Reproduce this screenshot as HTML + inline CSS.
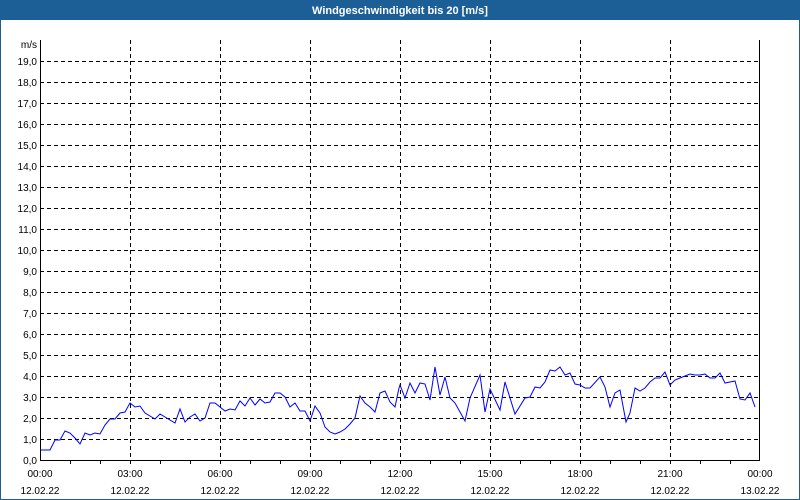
<!DOCTYPE html>
<html><head><meta charset="utf-8"><style>
html,body{margin:0;padding:0;width:800px;height:500px;overflow:hidden;background:#fff}
</style></head><body>
<svg width="800" height="500" xmlns="http://www.w3.org/2000/svg" style="display:block;font-family:'Liberation Sans',sans-serif">
<rect x="0" y="0" width="800" height="500" fill="#fff"/>
<rect x="0.5" y="0.5" width="799" height="499" fill="none" stroke="#1c5f96"/>
<rect x="0" y="0" width="800" height="20" fill="#1c5f96"/>
<text x="400" y="14" fill="#fff" font-size="11" font-weight="bold" text-anchor="middle">Windgeschwindigkeit bis 20 [m/s]</text>
<g stroke="#000" stroke-dasharray="4,3" stroke-width="1">
<g id="h">
<line x1="40" x2="760" y1="61.5" y2="61.5"/><line x1="40" x2="760" y1="82.5" y2="82.5"/><line x1="40" x2="760" y1="103.5" y2="103.5"/><line x1="40" x2="760" y1="124.5" y2="124.5"/><line x1="40" x2="760" y1="145.5" y2="145.5"/><line x1="40" x2="760" y1="166.5" y2="166.5"/><line x1="40" x2="760" y1="187.5" y2="187.5"/><line x1="40" x2="760" y1="208.5" y2="208.5"/><line x1="40" x2="760" y1="229.5" y2="229.5"/><line x1="40" x2="760" y1="250.5" y2="250.5"/><line x1="40" x2="760" y1="271.5" y2="271.5"/><line x1="40" x2="760" y1="292.5" y2="292.5"/><line x1="40" x2="760" y1="313.5" y2="313.5"/><line x1="40" x2="760" y1="334.5" y2="334.5"/><line x1="40" x2="760" y1="355.5" y2="355.5"/><line x1="40" x2="760" y1="376.5" y2="376.5"/><line x1="40" x2="760" y1="397.5" y2="397.5"/><line x1="40" x2="760" y1="418.5" y2="418.5"/><line x1="40" x2="760" y1="439.5" y2="439.5"/>
</g>
<line x1="130.5" x2="130.5" y1="40" y2="460"/><line x1="220.5" x2="220.5" y1="40" y2="460"/><line x1="310.5" x2="310.5" y1="40" y2="460"/><line x1="400.5" x2="400.5" y1="40" y2="460"/><line x1="490.5" x2="490.5" y1="40" y2="460"/><line x1="580.5" x2="580.5" y1="40" y2="460"/><line x1="670.5" x2="670.5" y1="40" y2="460"/>
</g>
<g stroke="#000" stroke-width="1">
<line x1="40.5" x2="40.5" y1="40" y2="461"/><line x1="759.5" x2="759.5" y1="40" y2="461"/><line x1="40" x2="760" y1="460.5" y2="460.5"/>
<line x1="70.5" x2="70.5" y1="460" y2="464"/><line x1="100.5" x2="100.5" y1="460" y2="464"/><line x1="130.5" x2="130.5" y1="460" y2="464"/><line x1="160.5" x2="160.5" y1="460" y2="464"/><line x1="190.5" x2="190.5" y1="460" y2="464"/><line x1="220.5" x2="220.5" y1="460" y2="464"/><line x1="250.5" x2="250.5" y1="460" y2="464"/><line x1="280.5" x2="280.5" y1="460" y2="464"/><line x1="310.5" x2="310.5" y1="460" y2="464"/><line x1="340.5" x2="340.5" y1="460" y2="464"/><line x1="370.5" x2="370.5" y1="460" y2="464"/><line x1="400.5" x2="400.5" y1="460" y2="464"/><line x1="430.5" x2="430.5" y1="460" y2="464"/><line x1="460.5" x2="460.5" y1="460" y2="464"/><line x1="490.5" x2="490.5" y1="460" y2="464"/><line x1="520.5" x2="520.5" y1="460" y2="464"/><line x1="550.5" x2="550.5" y1="460" y2="464"/><line x1="580.5" x2="580.5" y1="460" y2="464"/><line x1="610.5" x2="610.5" y1="460" y2="464"/><line x1="640.5" x2="640.5" y1="460" y2="464"/><line x1="670.5" x2="670.5" y1="460" y2="464"/><line x1="700.5" x2="700.5" y1="460" y2="464"/><line x1="730.5" x2="730.5" y1="460" y2="464"/>
</g>
<g font-size="10" fill="#000" text-anchor="end">
<text x="37" y="48">m/s</text>
<text x="37" y="65">19,0</text><text x="37" y="86">18,0</text><text x="37" y="107">17,0</text><text x="37" y="128">16,0</text><text x="37" y="149">15,0</text><text x="37" y="170">14,0</text><text x="37" y="191">13,0</text><text x="37" y="212">12,0</text><text x="37" y="233">11,0</text><text x="37" y="254">10,0</text><text x="37" y="275">9,0</text><text x="37" y="296">8,0</text><text x="37" y="317">7,0</text><text x="37" y="338">6,0</text><text x="37" y="359">5,0</text><text x="37" y="380">4,0</text><text x="37" y="401">3,0</text><text x="37" y="422">2,0</text><text x="37" y="443">1,0</text><text x="37" y="464">0,0</text>
</g>
<g font-size="10" fill="#000" text-anchor="middle">
<text x="40" y="477">00:00</text><text x="40" y="494">12.02.22</text>
<text x="130" y="477">03:00</text><text x="130" y="494">12.02.22</text>
<text x="220" y="477">06:00</text><text x="220" y="494">12.02.22</text>
<text x="310" y="477">09:00</text><text x="310" y="494">12.02.22</text>
<text x="400" y="477">12:00</text><text x="400" y="494">12.02.22</text>
<text x="490" y="477">15:00</text><text x="490" y="494">12.02.22</text>
<text x="580" y="477">18:00</text><text x="580" y="494">12.02.22</text>
<text x="670" y="477">21:00</text><text x="670" y="494">12.02.22</text>
<text x="760" y="477">00:00</text><text x="760" y="494">13.02.22</text>
</g>
<polyline fill="none" stroke="#0000ff" stroke-width="1" points="40,450 50,450 55,440 60,440 65,431 70,433 75,438 80,444 85,433 90,435 95,433 100,434 105,425 110,419 115,419 120,413 125,412 130,403 135,407 140,406 145,413 155,419 160,414 175,423 180,409 185,422 190,417 195,414 200,421 205,418 210,403 215,403 225,411 230,409 235,410 240,401 245,406 250,398 255,405 260,399 265,403 270,402 275,393 280,393 285,397 290,407 295,403 300,411 305,411 310,421 315,406 320,413 325,427 330,432 335,434 340,432 345,429 350,424 355,418 360,396 365,403 370,407 375,412 380,393 385,391 390,402 395,407 399,388 400,385 405,398 410,383 415,393 420,383 425,384 430,400 435,367 440,395 445,377 450,398 455,403 465,421 470,398 480,375 485,412 490,389 500,410 505,382 515,414 525,398 530,397 535,387 540,388 545,382 550,370 555,371 560,367 565,375 570,373 575,384 580,385 585,388 590,388 600,377 605,387 610,407 615,393 620,390 626,422 630,413 635,388 640,391 645,388 650,382 655,378 660,378 665,372 670,385 675,380 680,378 685,376 690,374 695,375 700,375 705,374 710,378 715,378 720,373 725,383 735,381 740,399 745,400 750,393 755,407"/>
</svg>
</body></html>
